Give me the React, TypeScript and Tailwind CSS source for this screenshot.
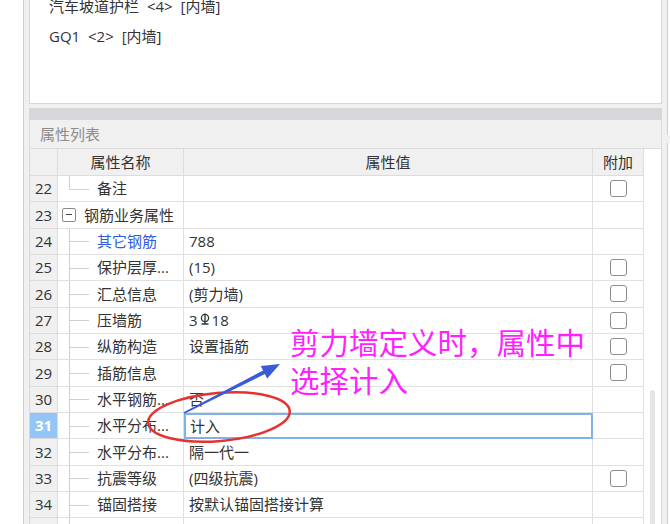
import React from "react";

type Row = {
  n: number;
  name: string;
  value: React.ReactNode;
  check?: boolean;
  tree?: "last" | "group" | "mid";
  blue?: boolean;
  active?: boolean;
};

// HRB400 rebar grade symbol
function RebarMark() {
  return (
    <svg width="10" height="13" viewBox="0 0 10 13" className="inline-block mx-[2px] -mt-[2px]" fill="none" stroke="#333" strokeWidth="1.3">
      <circle cx="5" cy="5" r="3.6" />
      <path d="M5 0.5V11M1.5 11H8.5" />
    </svg>
  );
}

const ROWS: Row[] = [
  { n: 22, name: "备注", value: "", check: true, tree: "last" },
  { n: 23, name: "钢筋业务属性", value: "", tree: "group" },
  { n: 24, name: "其它钢筋", value: "788", blue: true },
  { n: 25, name: "保护层厚...", value: "(15)", check: true },
  { n: 26, name: "汇总信息", value: "(剪力墙)", check: true },
  { n: 27, name: "压墙筋", value: <>3<RebarMark />18</>, check: true },
  { n: 28, name: "纵筋构造", value: "设置插筋", check: true },
  { n: 29, name: "插筋信息", value: "", check: true },
  { n: 30, name: "水平钢筋...", value: "否" },
  { n: 31, name: "水平分布...", value: "计入", active: true },
  { n: 32, name: "水平分布...", value: "隔一代一" },
  { n: 33, name: "抗震等级", value: "(四级抗震)", check: true },
  { n: 34, name: "锚固搭接", value: "按默认锚固搭接计算" },
  { n: 35, name: "计算设置", value: "按默认计算设置计算" },
];

function NameCell({ row }: { row: Row }) {
  if (row.tree === "group") {
    return (
      <div className="relative h-full flex items-center pl-[4px] border-r border-b border-[#e0e0e0]">
        <span className="w-[14px] h-[14px] border border-[#8a8a8a] rounded-[2px] flex items-center justify-center mr-[8px]">
          <span className="w-[6px] h-px bg-[#444]" />
        </span>
        <span>{row.name}</span>
      </div>
    );
  }
  return (
    <div className="relative h-full flex items-center pl-[39px] border-r border-b border-[#e0e0e0]">
      <span
        className={`absolute left-[11px] top-0 w-px bg-[#cfcfcf] ${row.tree === "last" ? "h-1/2" : "h-full"}`}
      />
      <span className="absolute left-[11px] top-1/2 w-[20px] h-px bg-[#cfcfcf]" />
      <span className={row.blue ? "text-[#2f5ce6]" : ""}>{row.name}</span>
    </div>
  );
}

export default function App() {
  return (
    <div
      className="relative w-[670px] h-[524px] overflow-hidden bg-white flex text-[15px] text-[#333]"
      style={{ fontFamily: '"Open Sans", "Noto Sans CJK SC", sans-serif' }}
    >
      <div className="w-[23px] shrink-0 bg-white" />
      <div className="flex-1 flex border-l border-[#cdcdcd] bg-[#f0f0f0] pl-[5px]">
        {/* main column */}
        <div className="w-[633px] shrink-0 flex flex-col">
          {/* component list */}
          <div className="h-[104px] shrink-0 bg-white border-x border-b border-[#d8d8d8] pl-[19px] overflow-hidden">
            <div className="mt-[-9px] leading-[30px] [word-spacing:4px]">
              <div>汽车坡道护栏 &lt;4&gt; [内墙]</div>
              <div>GQ1 &lt;2&gt; [内墙]</div>
            </div>
          </div>
          <div className="h-[4px] shrink-0" />
          <div className="h-[12px] shrink-0 bg-[#d5d7db]" />
          <div className="h-[29px] shrink-0 bg-[#f0f0f0] border-x border-b border-[#dcdcdc] pl-[10px] flex items-center text-[#8c8c8c]">
            属性列表
          </div>

          {/* property table */}
          <div className="flex-1 flex bg-white border-x border-[#d8d8d8]">
            <div className="w-[614px] shrink-0 flex flex-col">
              <div className="h-[27px] shrink-0 grid grid-cols-[28px_126px_409px_51px] bg-[#f0f0f0]">
                <div className="border-r border-b border-[#dcdcdc]" />
                <div className="border-r border-b border-[#dcdcdc] flex items-center justify-center">属性名称</div>
                <div className="border-r border-b border-[#dcdcdc] flex items-center justify-center">属性值</div>
                <div className="border-r border-b border-[#dcdcdc] flex items-center justify-center">附加</div>
              </div>
              {ROWS.map((row) => (
                <div key={row.n} className="h-[26.33px] shrink-0 grid grid-cols-[28px_126px_409px_51px]">
                  <div
                    className={`border-r border-b border-[#dcdcdc] flex items-center justify-center ${
                      row.active ? "bg-[#93c6f6] text-white font-bold" : "bg-[#f0f0f0]"
                    }`}
                  >
                    {row.n}
                  </div>
                  <NameCell row={row} />
                  <div
                    className={`flex items-center pl-[4px] ${
                      row.active ? "border-2 border-[#7fb3e8]" : "pl-[5px] border-r border-b border-[#e0e0e0]"
                    }`}
                  >
                    {row.value}
                  </div>
                  <div className="border-r border-b border-[#e0e0e0] flex items-center justify-center">
                    {row.check && <span className="w-[17px] h-[17px] border-[1.5px] border-[#8e8e8e] rounded-[3px] bg-white" />}
                  </div>
                </div>
              ))}
            </div>
            <div className="flex-1 pl-[6px] pt-[241px]">
              <div className="w-[5px] h-[200px] rounded-full bg-[#e6e6e6]" />
            </div>
          </div>
        </div>
        {/* right neighbour panel */}
        <div className="w-[5px] shrink-0" />
        <div className="flex-1 flex flex-col">
          <div className="h-[135px] bg-white border-l border-[#cfcfcf]" />
          <div className="h-[8px]" />
          <div className="flex-1 bg-white border-l border-[#cfcfcf]" />
        </div>
      </div>

      {/* annotation */}
      <svg className="absolute inset-0 pointer-events-none" width="670" height="524">
        <ellipse cx="219" cy="417" rx="71" ry="24" transform="rotate(-5 219 417)" fill="none" stroke="#e8312f" strokeWidth="2.5" />
        <polygon
          points="183.6,412.3 263.1,370.4 260.8,366 280,364 267.2,378.4 264.9,374 184.4,413.7"
          fill="#3a5bd9"
        />
      </svg>
      <div
        className="absolute left-[290px] top-[322px] text-[29.5px] leading-[38px] text-[#ff1fff]"
        style={{ fontFamily: '"Noto Sans CJK SC", sans-serif' }}
      >
        <div>剪力墙定义时，属性中</div>
        <div>选择计入</div>
      </div>
    </div>
  );
}
